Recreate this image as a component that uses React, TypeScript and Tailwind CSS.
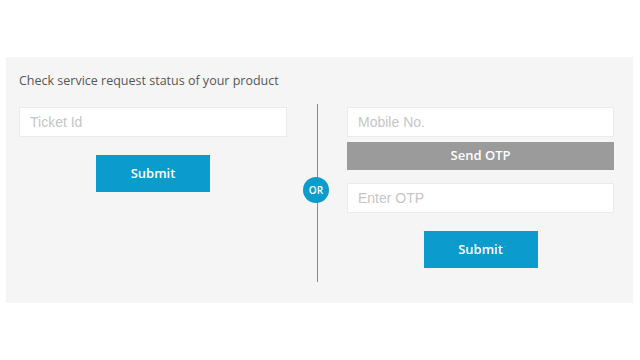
export default function App() {
  return (
    <div className="h-[360px] w-[640px] bg-white pt-[57px] pl-[6px] font-['Open_Sans',sans-serif]">
      <div className="h-[246px] w-[627px] bg-[#f5f5f5] pl-[13px]">
        <h1 className="pt-[14px] text-[12.5px] leading-[20px] text-[#555]">
          Check service request status of your product
        </h1>

        <div className="mt-[13px] flex">
          {/* Ticket lookup */}
          <div className="flex w-[268px] flex-col items-center pt-[3px]">
            <input
              className="h-[30px] w-full border border-[#ebebeb] bg-white px-[10px] font-['Liberation_Sans',sans-serif] text-[14px] text-[#555] placeholder:text-[#c6c6c6] outline-none"
              placeholder="Ticket Id"
            />
            <button className="mt-[18px] h-[37px] w-[114px] bg-[#0b9bcc] text-[13px] font-semibold text-white">
              Submit
            </button>
          </div>

          {/* Divider */}
          <div className="relative flex w-[60px] justify-center">
            <div className="h-[178px] w-px bg-[#8a8a8a]" />
            <div className="absolute left-[16px] top-[73px] flex h-[26px] w-[26px] items-center justify-center rounded-full bg-[#0b9bcc] text-[10px] font-semibold text-white">
              OR
            </div>
          </div>

          {/* Mobile + OTP */}
          <div className="flex w-[267px] flex-col items-center pt-[3px]">
            <input
              className="h-[30px] w-full border border-[#ebebeb] bg-white px-[10px] font-['Liberation_Sans',sans-serif] text-[14px] text-[#555] placeholder:text-[#c6c6c6] outline-none"
              placeholder="Mobile No."
            />
            <button className="mt-[5px] h-[28px] w-full bg-[#9b9b9b] text-[13px] font-semibold text-white">
              Send OTP
            </button>
            <input
              className="mt-[13px] h-[30px] w-full border border-[#ebebeb] bg-white px-[10px] font-['Liberation_Sans',sans-serif] text-[14px] text-[#555] placeholder:text-[#c6c6c6] outline-none"
              placeholder="Enter OTP"
            />
            <button className="mt-[18px] h-[37px] w-[114px] bg-[#0b9bcc] text-[13px] font-semibold text-white">
              Submit
            </button>
          </div>
        </div>
      </div>
    </div>
  );
}
